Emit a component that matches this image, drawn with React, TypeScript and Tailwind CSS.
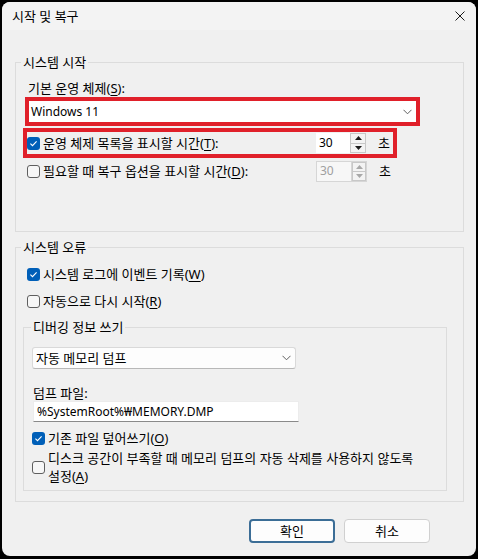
import type { ReactNode } from "react";

const FONT = { fontFamily: '"Noto Sans", "Noto Sans CJK KR", sans-serif' };

function Acc({ k }: { k: string }) {
  return (
    <>
      (<span className="underline underline-offset-2">{k}</span>)
    </>
  );
}

function CheckBox({ checked }: { checked?: boolean }) {
  if (checked) {
    return (
      <span className="flex h-[13px] w-[13px] shrink-0 items-center justify-center rounded-[3px] bg-[#005fb8]">
        <svg width="13" height="13" viewBox="0 0 13 13" fill="none">
          <path d="M3.4 6.7 L5.5 8.7 L9.6 4.4" stroke="white" strokeWidth="1.1" />
        </svg>
      </span>
    );
  }
  return (
    <span className="h-[13px] w-[13px] shrink-0 rounded-[3px] border border-[#5f5f5f] bg-[#f7f7f7]" />
  );
}

function Arrow({ up, disabled }: { up?: boolean; disabled?: boolean }) {
  return (
    <svg width="7" height="4" viewBox="0 0 7 4">
      <path
        d={up ? "M0 4 L3.5 0 L7 4 Z" : "M0 0 L7 0 L3.5 4 Z"}
        fill={disabled ? "#a8a8a8" : "#1a1a1a"}
      />
    </svg>
  );
}

function Spin({ disabled }: { disabled?: boolean }) {
  return (
    <div className="flex items-center text-[12px]">
      <div
        className={
          disabled
            ? "flex h-[21px] w-[35px] items-center border border-r-0 border-[#d6d6d6] bg-[#f7f7f7] pl-[3px] text-[#a0a0a0]"
            : "flex h-[20px] w-[34px] items-center bg-white pl-[3px]"
        }
      >
        30
      </div>
      <div className={disabled ? "flex h-[21px] w-[16px] flex-col border border-[#d6d6d6]" : "flex h-[20px] w-[16px] flex-col"}>
        <div className="flex flex-1 items-center justify-center border border-[#c8c8c8] bg-[#f3f3f3]">
          <Arrow up disabled={disabled} />
        </div>
        <div className="flex flex-1 items-center justify-center border border-t-0 border-[#c8c8c8] bg-[#f3f3f3]">
          <Arrow disabled={disabled} />
        </div>
      </div>
    </div>
  );
}

function Chevron() {
  return (
    <svg width="9" height="6" viewBox="0 0 9 6" fill="none">
      <path d="M0.5 0.8 L4.5 4.8 L8.5 0.8" stroke="#606060" strokeWidth="1" />
    </svg>
  );
}

function Group({
  title,
  className,
  legendClass,
  children,
}: {
  title: string;
  className: string;
  legendClass: string;
  children: ReactNode;
}) {
  return (
    <fieldset className={"flex flex-col border border-[#dcdcdc] " + className}>
      <legend className={"px-[2px] leading-[16px] " + legendClass}>{title}</legend>
      {children}
    </fieldset>
  );
}

export default function App() {
  return (
    <div
      className="h-[559px] w-[478px] bg-black pl-[2px] pt-[2px] text-[13px] leading-[16px] text-black"
      style={FONT}
    >
      <div className="flex h-[554px] w-[474px] flex-col overflow-hidden rounded-[8px] bg-[#f0f0f0]">
        {/* title bar */}
        <div className="flex h-[28px] items-center justify-between bg-[#f3f3f3] pl-[10px] pr-[11px]">
          <span>시작 및 복구</span>
          <svg width="10" height="10" viewBox="0 0 10 10">
            <path d="M0.5 0.5 L9.5 9.5 M9.5 0.5 L0.5 9.5" stroke="#1a1a1a" strokeWidth="1" />
          </svg>
        </div>

        {/* 시스템 시작 */}
        <Group title="시스템 시작" className="ml-[13px] mt-[24px] w-[449px] pb-[49px]" legendClass="ml-[5px]">
          <div className="ml-[12px] mt-[10px]">
            기본 운영 체제<Acc k="S" />:
          </div>
          <div className="ml-[9px] mt-[1px] h-[29px] w-[395px] border-4 border-[#e0202a]">
            <div className="flex h-full items-center justify-between bg-white pl-[2px] pr-[4px]">
              <span className="text-[12px]">Windows 11</span>
              <Chevron />
            </div>
          </div>
          <div className="ml-[7px] mt-[2px] flex h-[30px] w-[374px] items-center border-4 border-[#e0202a]">
            <CheckBox checked />
            <span className="ml-[3px] w-[273px]">
              운영 체제 목록을 표시할 시간<Acc k="T" />:
            </span>
            <Spin />
            <span className="ml-[12px]">초</span>
          </div>
          <div className="ml-[11px] mt-[2px] flex h-[22px] items-center">
            <CheckBox />
            <span className="ml-[3px] w-[273px]">
              필요할 때 복구 옵션을 표시할 시간<Acc k="D" />:
            </span>
            <Spin disabled />
            <span className="ml-[12px]">초</span>
          </div>
        </Group>

        {/* 시스템 오류 */}
        <Group title="시스템 오류" className="ml-[13px] mt-[7px] w-[449px] pb-[10px]" legendClass="ml-[5px]">
          <div className="ml-[11px] mt-[8px] flex h-[22px] items-center gap-[3px]">
            <CheckBox checked />
            <span>
              시스템 로그에 이벤트 기록<Acc k="W" />
            </span>
          </div>
          <div className="ml-[11px] mt-[5px] flex h-[22px] items-center gap-[3px]">
            <CheckBox />
            <span>
              자동으로 다시 시작<Acc k="R" />
            </span>
          </div>

          <Group title="디버깅 정보 쓰기" className="ml-[7px] mt-[7px] w-[424px] pb-[5px]" legendClass="ml-[7px]">
            <div className="ml-[8px] mt-[12px] flex h-[22px] w-[264px] items-center justify-between rounded-[3px] border border-[#d9d9d9] border-b-[#b8b8b8] bg-[#fdfdfd] pl-[3px] pr-[4px]">
              <span>자동 메모리 덤프</span>
              <Chevron />
            </div>
            <div className="ml-[9px] mt-[16px]">덤프 파일:</div>
            <div className="ml-[9px] flex h-[21px] w-[266px] items-center border border-[#ececec] border-b-[#8a8a8a] bg-white pl-[3px] text-[12px]">
              %SystemRoot%₩MEMORY.DMP
            </div>
            <div className="ml-[8px] mt-[6px] flex h-[20px] items-center gap-[3px]">
              <CheckBox checked />
              <span>
                기존 파일 덮어쓰기<Acc k="O" />
              </span>
            </div>
            <div className="ml-[8px] mt-[1px] flex items-center gap-[3px]">
              <CheckBox />
              <span className="whitespace-nowrap leading-[18px]">
                디스크 공간이 부족할 때 메모리 덤프의 자동 삭제를 사용하지 않도록
                <br />
                설정<Acc k="A" />
              </span>
            </div>
          </Group>
        </Group>

        {/* buttons */}
        <div className="mt-[17px] flex justify-end gap-[9px] pr-[46px]">
          <button className="flex h-[24px] w-[86px] items-center justify-center rounded-[4px] border-2 border-[#3b6d96] bg-[#fdfdfd]">
            확인
          </button>
          <button className="flex h-[24px] w-[86px] items-center justify-center rounded-[4px] border border-[#d0d0d0] bg-[#fdfdfd]">
            취소
          </button>
        </div>
      </div>
    </div>
  );
}
